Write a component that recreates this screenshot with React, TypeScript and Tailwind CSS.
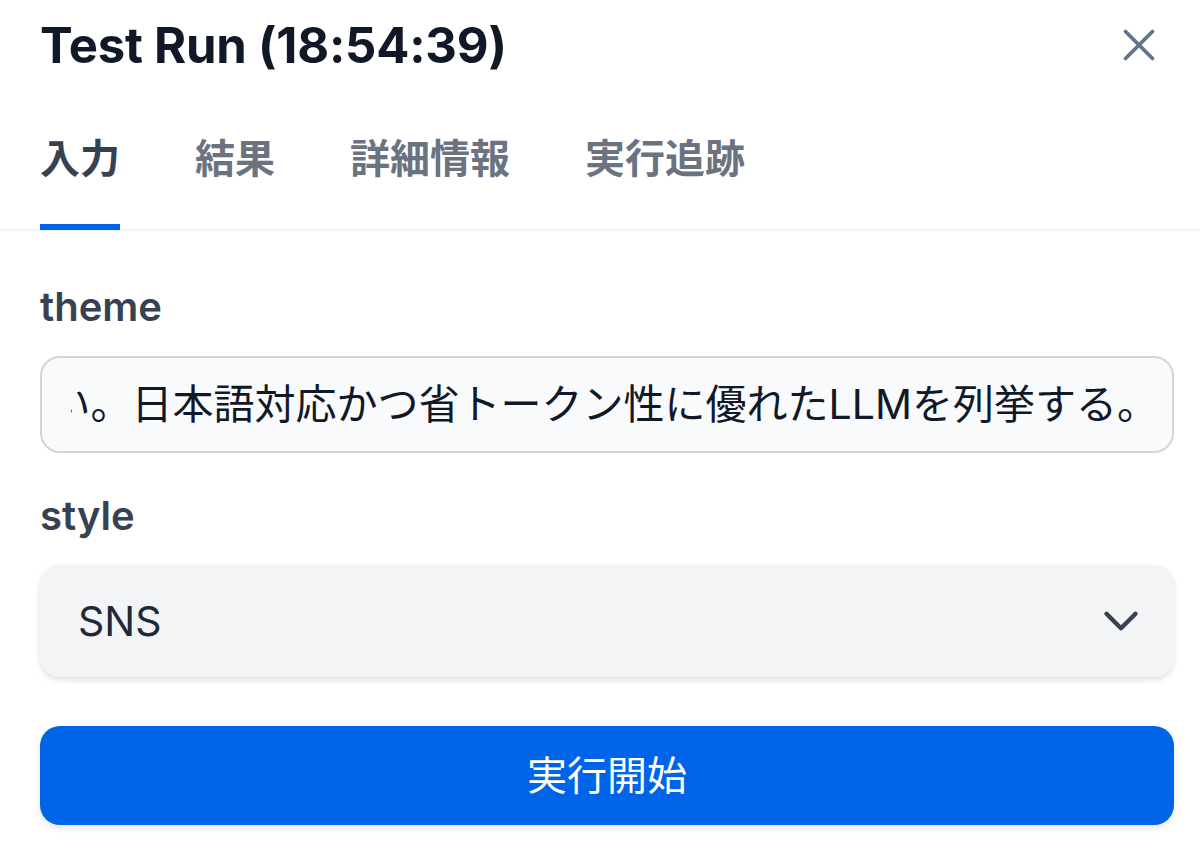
import React from "react";

const font = { fontFamily: 'Inter, "Noto Sans CJK JP", sans-serif' };

export default function App() {
  return (
    <div className="w-[1200px] h-[857px] bg-white overflow-hidden" style={font}>
      <div className="flex items-start justify-between pl-[40px] pr-[34px] pt-[21px] h-[70px]">
        <h1 className="text-[49px] leading-none font-bold text-[#111827] tracking-[-0.2px]">Test Run (18:54:39)</h1>
        <svg width="54" height="54" viewBox="0 0 24 24" fill="none" stroke="#64748b" strokeWidth="1.7" strokeLinecap="round" strokeLinejoin="round" className="-mt-[3px]">
          <path d="M18 6 6 18" />
          <path d="m6 6 12 12" />
        </svg>
      </div>
      <div className="border-b-[2px] border-[#f3f4f6] flex gap-[75px] px-[40px] mt-[69px]">
        <div className="flex flex-col items-stretch">
          <span className="text-[40px] leading-none font-bold text-[#374151] pb-[45px]">入力</span>
          <div className="h-[6px] bg-[#0064e8] -mb-[1px]" />
        </div>
        <span className="text-[40px] leading-none font-bold text-[#6b7280]">結果</span>
        <span className="text-[40px] leading-none font-bold text-[#6b7280]">詳細情報</span>
        <span className="text-[40px] leading-none font-bold text-[#6b7280]">実行追跡</span>
      </div>
      <div className="pl-[40px] pr-[26px] pt-[56px] flex flex-col">
        <label className="text-[40px] leading-none font-semibold text-[#374151]">theme</label>
        <div className="mt-[29px] h-[97px] rounded-[20px] border-[2.5px] border-[#d1d5db] bg-[#f9fafb] pl-[29px] pr-[14px] flex items-center">
          <div className="flex-1 min-w-0 flex justify-end overflow-hidden">
            <span className="whitespace-nowrap text-[41px] leading-none text-[#111827]">
              最新のモデルを調べたい。日本語対応かつ省トークン性に優れたLLMを列挙する。
            </span>
          </div>
        </div>
        <label className="mt-[43px] text-[40px] leading-none font-semibold text-[#374151]">style</label>
        <div className="mt-[29px] h-[112px] rounded-[20px] bg-[#f3f4f6] shadow-[0_3px_6px_rgba(0,0,0,0.12)] flex items-center justify-between pl-[38px] pr-[24px]">
          <span className="text-[41px] leading-none text-[#1f2937]">SNS</span>
          <svg width="58" height="58" viewBox="0 0 24 24" fill="none" stroke="#374151" strokeWidth="1.8" strokeLinecap="round" strokeLinejoin="round">
            <path d="m6 9 6 6 6-6" />
          </svg>
        </div>
        <button className="mt-[49px] h-[99px] rounded-[20px] bg-[#0064e8] text-white text-[40px] leading-none shadow-[0_3px_6px_rgba(0,0,0,0.1)] flex items-center justify-center">
          実行開始
        </button>
      </div>
    </div>
  );
}
